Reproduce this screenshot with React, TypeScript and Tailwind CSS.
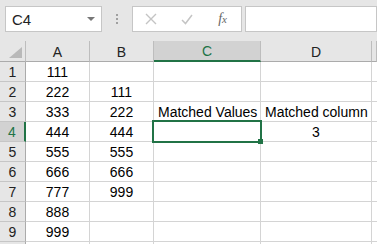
import React from 'react';

const cols = ['A', 'B', 'C', 'D', ''];

const rows: string[][] = [
  ['111', '', '', ''],
  ['222', '111', '', ''],
  ['333', '222', 'Matched Values', 'Matched column'],
  ['444', '444', '', '3'],
  ['555', '555', '', ''],
  ['666', '666', '', ''],
  ['777', '999', '', ''],
  ['888', '', '', ''],
  ['999', '', '', ''],
  ['', '', '', ''],
];

const App: React.FC = () => {
  return (
    <div className="w-[377px] h-[244px] overflow-hidden bg-[#e6e6e6] font-['Liberation_Sans',Arial,sans-serif] text-[14px] text-black">
      {/* formula bar */}
      <div className="h-[41px] flex items-start pt-[6px] pl-[5px]">
        <div className="w-[102px] h-[26px] bg-white border border-[#c6c6c6] flex items-center justify-between pl-[6px] pr-[6px]">
          <span className="text-[15px] text-[#222] leading-none">C4</span>
          <span className="w-0 h-0 border-l-[4px] border-r-[4px] border-t-[4px] border-l-transparent border-r-transparent border-t-[#777]" />
        </div>
        <div className="w-[31px] h-[26px] flex flex-col items-center justify-center gap-[2px]">
          <span className="w-[2px] h-[2px] bg-[#a0a0a0]" />
          <span className="w-[2px] h-[2px] bg-[#a0a0a0]" />
          <span className="w-[2px] h-[2px] bg-[#a0a0a0]" />
        </div>
        <div className="w-[110px] h-[26px] bg-white border border-[#c6c6c6] flex items-center">
          <svg width="36" height="24" viewBox="0 0 36 24" className="shrink-0">
            <path d="M13 7 L23 17 M23 7 L13 17" stroke="#c4c4c4" strokeWidth="1.4" fill="none" />
          </svg>
          <svg width="36" height="24" viewBox="0 0 36 24" className="shrink-0">
            <path d="M13 13 L16.5 16.5 L23 8" stroke="#c4c4c4" strokeWidth="1.5" fill="none" />
          </svg>
          <span className="w-[36px] text-center font-['Liberation_Serif',serif] italic text-[14px] text-[#666] leading-none">
            f<span className="text-[11px]">x</span>
          </span>
        </div>
        <div className="ml-[3px] w-[140px] h-[26px] bg-white border border-[#c6c6c6]" />
      </div>

      {/* sheet */}
      <div className="grid grid-cols-[26px_64px_64px_107px_111px_1fr]">
        {/* column headers */}
        <div className="h-[21px] border-r border-b border-r-[#bdbdbd] border-b-[#ababab] flex items-end justify-end pr-[3px] pb-[3px]">
          <svg width="13" height="11" viewBox="0 0 13 11">
            <polygon points="13,0 13,11 0,11" fill="#b9b9b9" />
          </svg>
        </div>
        {cols.map((c, i) =>
          c === 'C' ? (
            <div
              key={i}
              className="h-[21px] bg-[#d2d2d2] border-r border-r-[#bdbdbd] border-b-2 border-b-[#217346] flex items-center justify-center text-[#217346] leading-none pt-[1px]"
            >
              {c}
            </div>
          ) : (
            <div
              key={i}
              className="h-[21px] border-r border-b border-r-[#bdbdbd] border-b-[#ababab] flex items-center justify-center text-[#222] leading-none pt-[1px]"
            >
              {c}
            </div>
          )
        )}

        {rows.map((r, ri) => (
          <React.Fragment key={ri}>
            {ri === 3 ? (
              <div className="h-[20px] bg-[#d2d2d2] border-r-2 border-r-[#217346] border-b border-b-[#c6c6c6] flex items-end justify-center text-[#217346] leading-[16px] pb-[1px]">
                {ri + 1}
              </div>
            ) : (
              <div className="h-[20px] border-r border-r-[#ababab] border-b border-b-[#c6c6c6] flex items-end justify-center text-[#222] leading-[16px] pb-[1px]">
                {ri < 9 ? ri + 1 : ''}
              </div>
            )}
            <div className="h-[20px] bg-white border-r border-b border-[#d4d4d4] flex items-end justify-center leading-[16px] pb-[1px]">
              {r[0]}
            </div>
            <div className="h-[20px] bg-white border-r border-b border-[#d4d4d4] flex items-end justify-center leading-[16px] pb-[1px]">
              {r[1]}
            </div>
            <div className="relative h-[20px] bg-white border-r border-b border-[#d4d4d4] flex items-end pl-[4px] leading-[16px] pb-[1px] whitespace-nowrap">
              {r[2]}
              {ri === 3 && (
                <>
                  <div className="absolute z-10 -left-[2px] -top-[2px] w-[110px] h-[23px] border-2 border-[#217346]" />
                  <div className="absolute z-20 -right-[3px] -bottom-[3px] w-[5px] h-[5px] bg-[#217346]" />
                </>
              )}
            </div>
            <div
              className={
                r[3] === '3'
                  ? 'h-[20px] bg-white border-r border-b border-[#d4d4d4] flex items-end justify-center leading-[16px] pb-[1px]'
                  : 'h-[20px] bg-white border-r border-b border-[#d4d4d4] flex items-end pl-[4px] leading-[16px] pb-[1px] whitespace-nowrap'
              }
            >
              {r[3]}
            </div>
            <div className="h-[20px] bg-white border-b border-[#d4d4d4]" />
          </React.Fragment>
        ))}
      </div>
    </div>
  );
};

export default App;
